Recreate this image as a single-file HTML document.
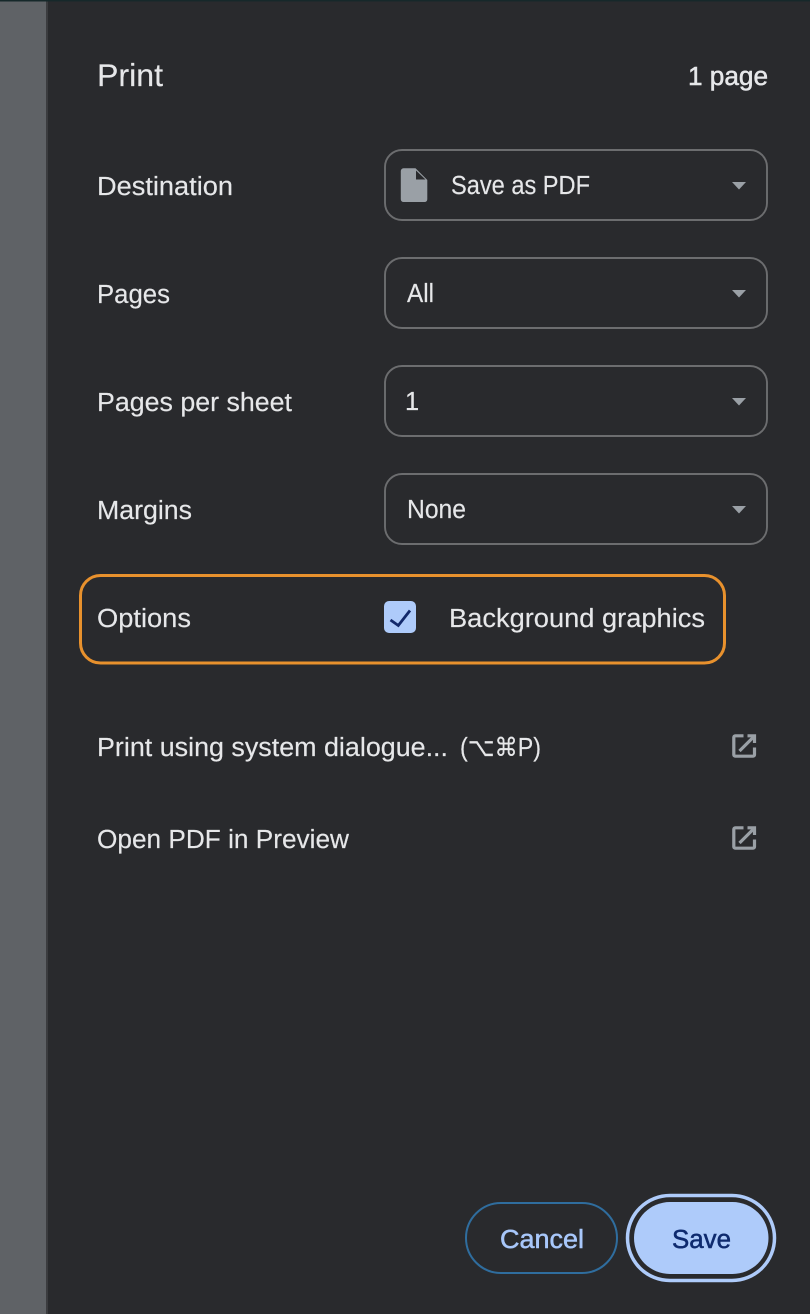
<!DOCTYPE html>
<html>
<head>
<meta charset="utf-8">
<style>
html,body{margin:0;padding:0;background:#292a2d;width:810px;height:1314px;overflow:hidden}
svg{display:block}
text{font-family:"Liberation Sans","DejaVu Sans",sans-serif;font-size:25.5px;fill:#e6e7e9;stroke:#e6e7e9;stroke-width:.15px;white-space:pre}
.m{stroke:#e8eaed;stroke-width:.5px}
</style>
</head>
<body>
<svg width="810" height="1314" viewBox="0 0 810 1314" xmlns="http://www.w3.org/2000/svg">
<rect width="810" height="1314" fill="#292a2d"/>
<rect x="0" y="0" width="46" height="1314" fill="#5f6266"/>
<rect x="46" y="0" width="2" height="1314" fill="#3b3c3f"/>
<rect x="0" y="0" width="810" height="1.5" fill="#16282a"/>

<text x="97" y="86" style="font-size:31.5px" textLength="66" lengthAdjust="spacingAndGlyphs">Print</text>
<text x="688" y="85" class="m" textLength="80" lengthAdjust="spacingAndGlyphs">1 page</text>

<text x="97" y="195" textLength="136" lengthAdjust="spacingAndGlyphs">Destination</text>
<text x="97" y="303" textLength="73" lengthAdjust="spacingAndGlyphs">Pages</text>
<text x="97" y="411" textLength="195" lengthAdjust="spacingAndGlyphs">Pages per sheet</text>
<text x="97" y="519" textLength="95" lengthAdjust="spacingAndGlyphs">Margins</text>
<text x="97" y="627" textLength="94" lengthAdjust="spacingAndGlyphs">Options</text>

<g fill="none" stroke="#6c6d6f" stroke-width="1.9">
<rect x="385" y="150" width="382" height="70" rx="17"/>
<rect x="385" y="258" width="382" height="70" rx="17"/>
<rect x="385" y="366" width="382" height="70" rx="17"/>
<rect x="385" y="474" width="382" height="70" rx="17"/>
</g>
<g fill="#9aa0a6">
<path d="M732 182h14l-7 7.500z"/>
<path d="M732 290h14l-7 7.500z"/>
<path d="M732 398h14l-7 7.500z"/>
<path d="M732 506h14l-7 7.500z"/>
</g>

<path d="M403.500 168.300H415.500L427.300 180V199.300a2.700 2.700 0 0 1-2.700 2.700H403.500a2.700 2.700 0 0 1-2.700-2.700V171a2.700 2.700 0 0 1 2.700-2.700z" fill="#9aa0a6"/>
<path d="M416 170.500V179.500H425.500z" fill="#292a2d"/>

<text x="451" y="194" textLength="139" lengthAdjust="spacingAndGlyphs">Save as PDF</text>
<text x="407" y="302" textLength="27" lengthAdjust="spacingAndGlyphs">All</text>
<text x="405" y="410">1</text>
<text x="407" y="518" textLength="59" lengthAdjust="spacingAndGlyphs">None</text>

<rect x="80.500" y="575.500" width="644" height="87.500" rx="20" fill="none" stroke="#e8912d" stroke-width="3"/>
<rect x="384" y="601" width="32" height="32" rx="5" fill="#aecbfa"/>
<path d="M390.500 620L398.300 625.500L410 610.500" fill="none" stroke="#12296b" stroke-width="2.800"/>
<text x="449" y="627" textLength="256" lengthAdjust="spacingAndGlyphs">Background graphics</text>

<text x="97" y="756" textLength="351" lengthAdjust="spacingAndGlyphs">Print using system dialogue...</text>
<text x="460" y="756" textLength="81" lengthAdjust="spacingAndGlyphs">(⌥⌘P)</text>
<text x="97" y="848" textLength="252" lengthAdjust="spacingAndGlyphs">Open PDF in Preview</text>

<g fill="none" stroke="#9aa0a6" stroke-width="3.200">
<path d="M743.500 735.800H735.300a1.500 1.500 0 0 0-1.500 1.500V754.700a1.500 1.500 0 0 0 1.500 1.500H753a1.500 1.500 0 0 0 1.500-1.500V747.500"/>
<path d="M739.500 751L754.500 736"/>
<path d="M747.500 735.800H754.500V743"/>
</g>
<g fill="none" stroke="#9aa0a6" stroke-width="3.200">
<path d="M743.500 827.800H735.300a1.500 1.500 0 0 0-1.500 1.500V846.700a1.500 1.500 0 0 0 1.500 1.500H753a1.500 1.500 0 0 0 1.500-1.500V839.500"/>
<path d="M739.500 843L754.500 828"/>
<path d="M747.500 827.800H754.500V835"/>
</g>

<rect x="466" y="1203" width="151" height="70" rx="35" fill="none" stroke="#2f6d9e" stroke-width="2"/>
<text x="500" y="1248" class="m" style="fill:#a8c7fa;stroke:#a8c7fa" textLength="84" lengthAdjust="spacingAndGlyphs">Cancel</text>

<rect x="627.500" y="1195.500" width="147" height="85" rx="42.500" fill="none" stroke="#aecbfa" stroke-width="3.500"/>
<rect x="634" y="1202" width="134.500" height="72" rx="36" fill="#aecbfa"/>
<text x="672" y="1248" class="m" style="fill:#0e2a6e;stroke:#0e2a6e" textLength="59" lengthAdjust="spacingAndGlyphs">Save</text>
</svg>
</body>
</html>
